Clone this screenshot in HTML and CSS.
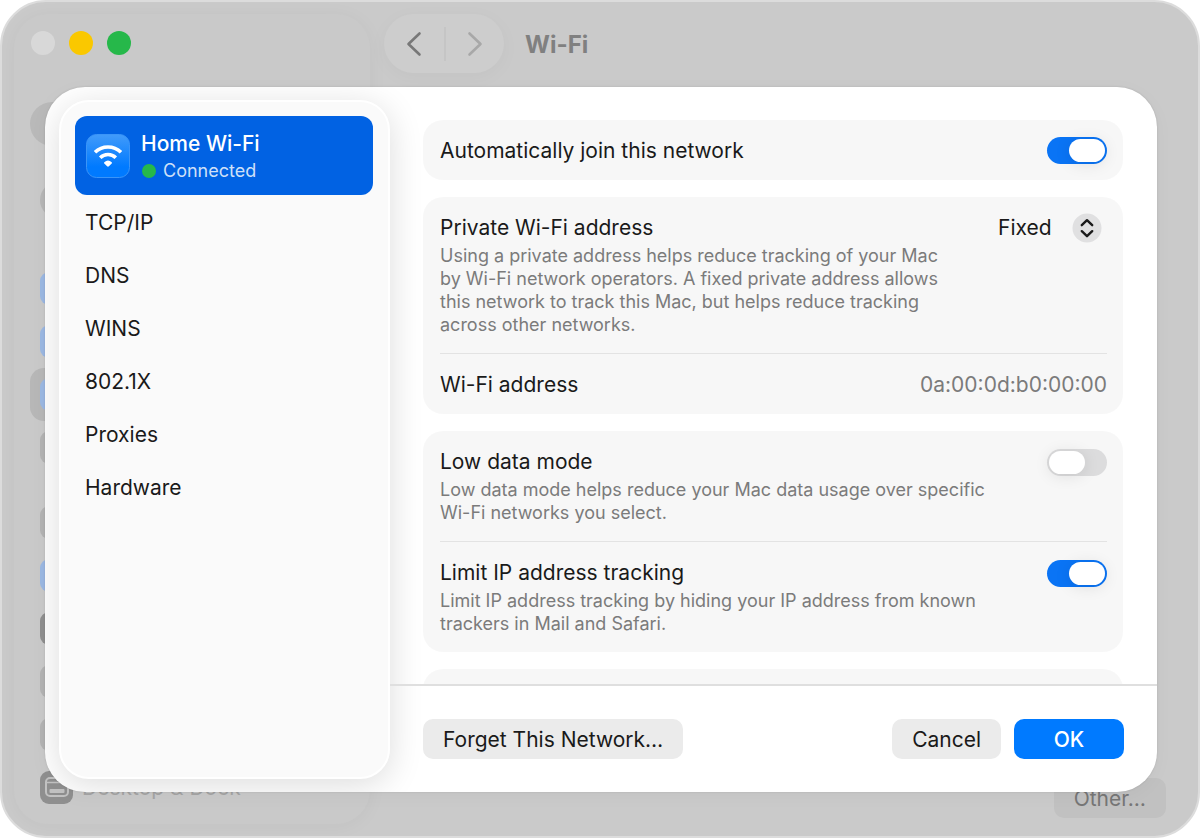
FILE: index.html
```html
<!DOCTYPE html>
<html lang="en">
<head>
<meta charset="utf-8">
<title>Wi-Fi</title>
<meta name="viewport" content="width=device-width, initial-scale=1">
<link rel="stylesheet" href="styles.css">
</head>
<body>
<div class="window">
  <aside class="side">
    <div class="lights"><span class="light"></span><span class="light light-yellow"></span><span class="light light-green"></span></div>
    <div class="account"></div>
    <div class="notice"></div>
    <ul class="side-list">
      <li class="side-row"><span class="tile tile-blue"></span></li>
      <li class="side-row"><span class="tile tile-blue"></span></li>
      <li class="side-row side-row-current"><span class="tile tile-blue"></span></li>
      <li class="side-row"><span class="tile"></span></li>
    </ul>
    <ul class="side-list">
      <li class="side-row"><span class="tile"></span></li>
      <li class="side-row"><span class="tile tile-blue"></span></li>
      <li class="side-row"><span class="tile tile-dark"></span></li>
      <li class="side-row"><span class="tile"></span></li>
      <li class="side-row"><span class="tile"></span></li>
      <li class="side-row"><span class="tile tile-dark">
        <svg width="33" height="33" viewBox="0 0 33 33" fill="none" aria-hidden="true"><rect x="6" y="7" width="22" height="18" rx="4" stroke="#c2c2c2" stroke-width="2"/><path d="M6 11.500h22" stroke="#c2c2c2" stroke-width="1.500"/><rect x="9.500" y="18" width="15" height="4" rx="1" fill="#c2c2c2"/></svg>
      </span>Desktop &amp; Dock</li>
    </ul>
  </aside>
  <div class="main">
    <header class="toolbar">
      <div class="nav">
        <button class="nav-btn" type="button" aria-label="Back"><svg width="16" height="26" viewBox="0 0 16 26" fill="none"><path d="M13.500 2.500 2.500 13l11 10.500" stroke="#787878" stroke-width="2.600" stroke-linecap="round" stroke-linejoin="round"/></svg></button>
        <button class="nav-btn nav-btn-next" type="button" aria-label="Forward" disabled><svg width="16" height="26" viewBox="0 0 16 26" fill="none"><path d="m2.500 2.500 11 10.500-11 10.500" stroke="#a8a8a8" stroke-width="2.600" stroke-linecap="round" stroke-linejoin="round"/></svg></button>
      </div>
      <h1 class="title">Wi-Fi</h1>
    </header>
    <button class="btn btn-other" type="button">Other…</button>
  </div>

  <form class="sheet" role="dialog" aria-label="Home Wi-Fi">
    <nav class="tabs">
      <a class="network" href="#" aria-current="page">
        <svg class="network-icon" width="44" height="44" viewBox="0 0 44 44" fill="none" aria-hidden="true">
          <defs><linearGradient id="tile" x1="0" y1="0" x2="0" y2="1"><stop offset="0" stop-color="#429bfa"/><stop offset=".75" stop-color="#007aff"/></linearGradient></defs>
          <rect x=".5" y=".5" width="43" height="43" rx="10" fill="url(#tile)" stroke="#3b95f8"/>
          <path d="M9 18.300a18.700 18.700 0 0 1 26 0" stroke="#fff" stroke-width="3.600" stroke-linecap="butt"/>
          <path d="M14.200 23.700a11.200 11.200 0 0 1 15.600 0" stroke="#fff" stroke-width="3.600" stroke-linecap="butt"/>
          <path d="M18.300 28.200a5.600 5.600 0 0 1 7.400 0q.7.700 0 1.400l-2.800 2.700q-.9.800-1.800 0l-2.800-2.700q-.7-.7 0-1.400Z" fill="#fff"/>
        </svg>
        <span class="network-text"><span class="network-name">Home Wi-Fi</span><span class="network-state">Connected</span></span>
      </a>
      <a class="tab" href="#">TCP/IP</a>
      <a class="tab" href="#">DNS</a>
      <a class="tab" href="#">WINS</a>
      <a class="tab" href="#">802.1X</a>
      <a class="tab" href="#">Proxies</a>
      <a class="tab" href="#">Hardware</a>
    </nav>
    <div class="panel">
      <div class="settings">
        <section class="card">
          <div class="row row-single"><label class="label" for="join">Automatically join this network</label><input class="switch" type="checkbox" id="join" checked></div>
        </section>
        <section class="card">
          <div class="row">
            <div class="copy"><label class="label" for="address">Private Wi-Fi address</label><p class="hint">Using a private address helps reduce tracking of your Mac by Wi-Fi network operators. A fixed private address allows this network to track this Mac, but helps reduce tracking across other networks.</p></div>
            <span class="picker"><select class="picker-select" id="address"><option>Fixed</option></select><svg class="picker-icon" width="30" height="30" viewBox="0 0 30 30" fill="none" aria-hidden="true"><circle cx="15" cy="15" r="14.500" fill="#e0e0e1"/><path d="m9.800 12.200 5.200-5 5.200 5M9.800 18.200l5.200 5 5.200-5" stroke="#1b1b1b" stroke-width="2.400" stroke-linecap="round" stroke-linejoin="round"/></svg></span>
          </div>
          <div class="row row-single"><span class="label">Wi-Fi address</span><span class="value">0a:00:0d:b0:00:00</span></div>
        </section>
        <section class="card">
          <div class="row">
            <div class="copy"><label class="label" for="low">Low data mode</label><p class="hint">Low data mode helps reduce your Mac data usage over specific Wi-Fi networks you select.</p></div>
            <input class="switch" type="checkbox" id="low">
          </div>
          <div class="row">
            <div class="copy"><label class="label" for="limit">Limit IP address tracking</label><p class="hint">Limit IP address tracking by hiding your IP address from known trackers in Mail and Safari.</p></div>
            <input class="switch" type="checkbox" id="limit" checked>
          </div>
        </section>
        <section class="card card-next"></section>
      </div>
      <footer class="actions">
        <button class="btn" type="button">Forget This Network…</button>
        <button class="btn btn-cancel" type="button">Cancel</button>
        <button class="btn btn-primary" type="submit">OK</button>
      </footer>
    </div>
  </form>
</div>
</body>
</html>
```
FILE: styles.css
```css
* { box-sizing: border-box; }

body {
  margin: 0;
  background: #fff;
  color: #1a1a1a;
  font: 400 21px/26px Inter, "Liberation Sans", sans-serif;
}

button, select { font: inherit; color: inherit; }
a { color: inherit; text-decoration: none; }
ul { list-style: none; margin: 0; padding: 0; }

.window {
  position: relative;
  display: flex;
  height: 100vh;
  min-height: 600px;
  padding: 12px;
  border: 2px solid #dcdcdc;
  border-radius: 46px;
  background: #cacaca;
  overflow: hidden;
}

/* Dimmed settings window */
.side {
  flex: none;
  width: 356px;
  padding: 0 16px;
  border-radius: 34px;
  background: #c9c9c9;
  box-shadow: 0 2px 20px rgba(0, 0, 0, .04);
}
.lights { display: flex; gap: 14px; padding: 17px 0 0 1px; }
.light { width: 24px; height: 24px; border-radius: 50%; background: #d8d8d8; }
.light-yellow { background: #fac800; }
.light-green { background: #26b84a; }
.account { width: 44px; height: 44px; margin-top: 47px; border-radius: 50%; background: #b9b9b9; }
.notice { width: 36px; height: 36px; margin: 36px 0 44px 10px; border-radius: 50%; background: #b6b6b6; }
.side-list + .side-list { margin-top: 22px; }
.side-row {
  display: flex;
  align-items: center;
  gap: 9px;
  height: 53px;
  padding-left: 10px;
  border-radius: 14px;
  color: #a4a4a4;
}
.side-row-current { background: #b7b7b7; }
.tile { width: 33px; height: 33px; border-radius: 9px; background: #b3b3b3; }
.tile svg { display: block; }
.tile-blue { background: #9bb8e2; }
.tile-dark { background: #8f8f8f; }

.main { flex: 1; display: flex; flex-direction: column; justify-content: space-between; }
.toolbar { display: flex; align-items: center; gap: 21px; padding-left: 14px; }
.nav {
  display: flex;
  align-items: center;
  height: 59px;
  border-radius: 30px;
  background: #cdcdcd;
  box-shadow: 0 4px 20px rgba(0, 0, 0, .03);
}
.nav-btn { display: grid; place-items: center; width: 60px; height: 34px; padding: 0; border: 0; background: none; }
.nav-btn-next { border-left: 2px solid #c5c5c5; }
.title { margin: 0; padding-top: 2px; color: #808080; font-size: 24px; line-height: 30px; font-weight: 700; }

.btn {
  height: 40px;
  padding: 2px 20px 0;
  border: 0;
  border-radius: 10px;
  background: #ebebeb;
  white-space: nowrap;
}
.btn-other { align-self: flex-end; margin: 0 20px 6px 0; background: #c1c1c1; color: #767676; }

/* Network details dialog */
.sheet {
  position: absolute;
  inset: 85px 41px 44px 43px;
  display: flex;
  padding: 13px 0 13px 14px;
  border-radius: 40px;
  background: #fff;
  box-shadow: 0 0 2px rgba(0, 0, 0, .15), 0 4px 20px rgba(0, 0, 0, .03);
  overflow: hidden;
}
.tabs {
  display: flex;
  flex-direction: column;
  flex: none;
  width: 331px;
  padding: 14px 15px 14px 14px;
  border: 2px solid #fff;
  border-radius: 30px;
  background: #fafafa;
  box-shadow: 0 6px 34px rgba(0, 0, 0, .14);
}
.network {
  display: flex;
  align-items: center;
  gap: 11px;
  height: 79px;
  margin-bottom: 1px;
  padding-left: 11px;
  border-radius: 12px;
  background: #0162e3;
  color: #fff;
}
.network-icon { flex: none; }
.network-text { display: flex; flex-direction: column; gap: 2px; padding-top: 2px; }
.network-name { font-weight: 500; }
.network-state { display: flex; align-items: center; gap: 7px; font-size: 18px; line-height: 24px; color: #cfe0f8; }
.network-state::before { content: ""; width: 14px; height: 14px; margin-left: 1px; border-radius: 50%; background: #26b84a; }
.tab { display: flex; align-items: center; height: 53px; padding-left: 10px; }

.panel { flex: 1; min-width: 0; display: flex; flex-direction: column; margin: -13px 0; }
.settings {
  flex: 1;
  min-height: 0;
  display: flex;
  flex-direction: column;
  gap: 17px;
  padding: 33px 34px 0 33px;
  overflow-y: auto;
  scrollbar-width: none;
}
.card { flex: none; padding: 0 16px 0 17px; border-radius: 20px; background: rgba(0, 0, 0, .032); }
.card-next { height: 60px; }
.row { display: flex; justify-content: space-between; gap: 36px; padding: 18px 0 17px; }
.row + .row { border-top: 1px solid #e3e3e3; }
.row-single { align-items: center; min-height: 60px; padding: 0; }
.row + .row-single { min-height: 61px; }
.row-single .label, .value { padding-top: 2px; }
.hint { margin: 3px 0 0; color: #7b7b7b; font-size: 18px; line-height: 23px; }
.value { color: #7b7b7b; }

.switch {
  appearance: none;
  flex: none;
  display: flex;
  width: 60px;
  height: 27px;
  margin: 0;
  padding: 2px;
  border-radius: 14px;
  background: #dcdcdd;
}
.switch::before {
  content: "";
  width: 36px;
  height: 23px;
  border-radius: 12px;
  background: #fff;
  box-shadow: 0 2px 16px rgba(0, 0, 0, .1);
}
.switch:checked { justify-content: flex-end; background: #0a74f5; }

.picker { position: relative; flex: none; height: 30px; margin: -2px 5px 0 0; }
.picker-select { appearance: none; height: 30px; padding: 0 50px 0 0; border: 0; background: none; }
.picker-icon { position: absolute; top: 0; right: 0; pointer-events: none; }

.actions { display: flex; gap: 13px; padding: 33px; border-top: 2px solid #dfdfdf; }
.btn-cancel { margin-left: auto; }
.btn-primary { width: 110px; background: #007aff; color: #fff; font-weight: 500; }
```
